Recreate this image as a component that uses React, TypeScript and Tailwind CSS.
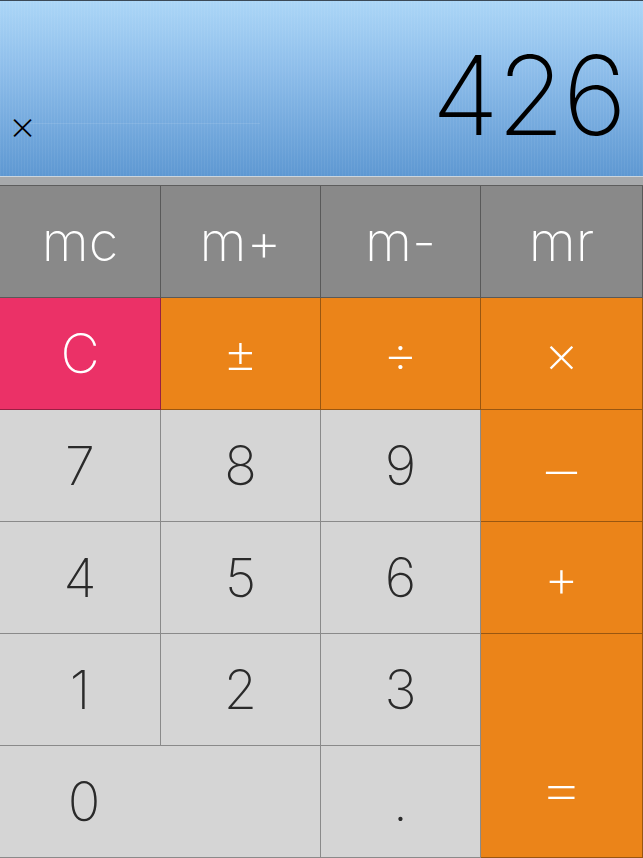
import React from "react";

type Key = {
  label: string;
  bg: string;
  text: string;
  extra?: string;
  inner?: string;
  labelCls?: string;
};

const font = { fontFamily: "Inter, 'Noto Sans', sans-serif" };

export default function App() {
  const keys: Key[] = [
    { label: "mc", bg: "bg-[#898989]", text: "text-white" },
    { label: "m+", bg: "bg-[#898989]", text: "text-white" },
    { label: "m-", bg: "bg-[#898989]", text: "text-white" },
    { label: "mr", bg: "bg-[#898989]", text: "text-white" },
    { label: "C", bg: "bg-[#eb3167]", text: "text-white" },
    { label: "±", bg: "bg-[#eb8419]", text: "text-white" },
    { label: "÷", bg: "bg-[#eb8419]", text: "text-white" },
    { label: "×", bg: "bg-[#eb8419]", text: "text-white" },
    { label: "7", bg: "bg-[#d5d5d5]", text: "text-[#2a2a2a]" },
    { label: "8", bg: "bg-[#d5d5d5]", text: "text-[#2a2a2a]" },
    { label: "9", bg: "bg-[#d5d5d5]", text: "text-[#2a2a2a]" },
    { label: "−", bg: "bg-[#eb8419]", text: "text-white", labelCls: "scale-x-[1.35] translate-y-[3px]" },
    { label: "4", bg: "bg-[#d5d5d5]", text: "text-[#2a2a2a]" },
    { label: "5", bg: "bg-[#d5d5d5]", text: "text-[#2a2a2a]" },
    { label: "6", bg: "bg-[#d5d5d5]", text: "text-[#2a2a2a]" },
    { label: "+", bg: "bg-[#eb8419]", text: "text-white" },
    { label: "1", bg: "bg-[#d5d5d5]", text: "text-[#2a2a2a]" },
    { label: "2", bg: "bg-[#d5d5d5]", text: "text-[#2a2a2a]" },
    { label: "3", bg: "bg-[#d5d5d5]", text: "text-[#2a2a2a]" },
    {
      label: "=",
      bg: "bg-[#eb8419]",
      text: "text-white",
      extra: "row-span-2 items-start pt-[128px]",
      labelCls: "scale-x-[1.3]",
    },
    {
      label: "0",
      bg: "bg-[#d5d5d5]",
      text: "text-[#2a2a2a]",
      extra: "col-span-2 justify-start",
      inner: "w-[168px]",
    },
    { label: ".", bg: "bg-[#d5d5d5]", text: "text-[#2a2a2a]" },
  ];

  return (
    <div className="w-[643px] h-[858px] overflow-hidden flex flex-col" style={font}>
      {/* display */}
      <div className="relative h-[176px] border-t border-[#3b4a58] bg-[image:repeating-linear-gradient(90deg,rgba(255,255,255,0.05)_0_1px,transparent_1px_3px),linear-gradient(to_bottom,#abd6f7,#8dbdea_40%,#5e98d2)] flex items-end justify-between pl-[9px] pr-[18px] pb-[26px]">
        <div className="absolute left-[30px] top-[122px] w-[230px] h-px bg-white/10" />
        <span className="text-black font-extralight text-[42px] leading-none mb-[4px]">×</span>
        <span className="text-black font-extralight text-[110px] leading-none tracking-[-2px]">
          426
        </span>
      </div>
      <div className="h-px bg-[#cbd6df]" />
      <div className="h-[8px] bg-[#a7a9ab]" />
      <div className="h-px bg-[#5d5d5d]" />
      {/* keys */}
      <div className="grid grid-cols-[161px_160px_160px_162px] grid-rows-[repeat(6,112px)] flex-1">
        {keys.map((k, i) => (
          <div
            key={i}
            className={`flex items-center justify-center border-r border-b border-black/35 ${k.bg} ${k.text} ${k.extra ?? ""}`}
          >
            <div className={`flex justify-center ${k.inner ?? ""}`}>
              <span className={`inline-block text-[54px] font-extralight leading-none ${k.labelCls ?? ""}`}>
                {k.label}
              </span>
            </div>
          </div>
        ))}
      </div>
    </div>
  );
}
